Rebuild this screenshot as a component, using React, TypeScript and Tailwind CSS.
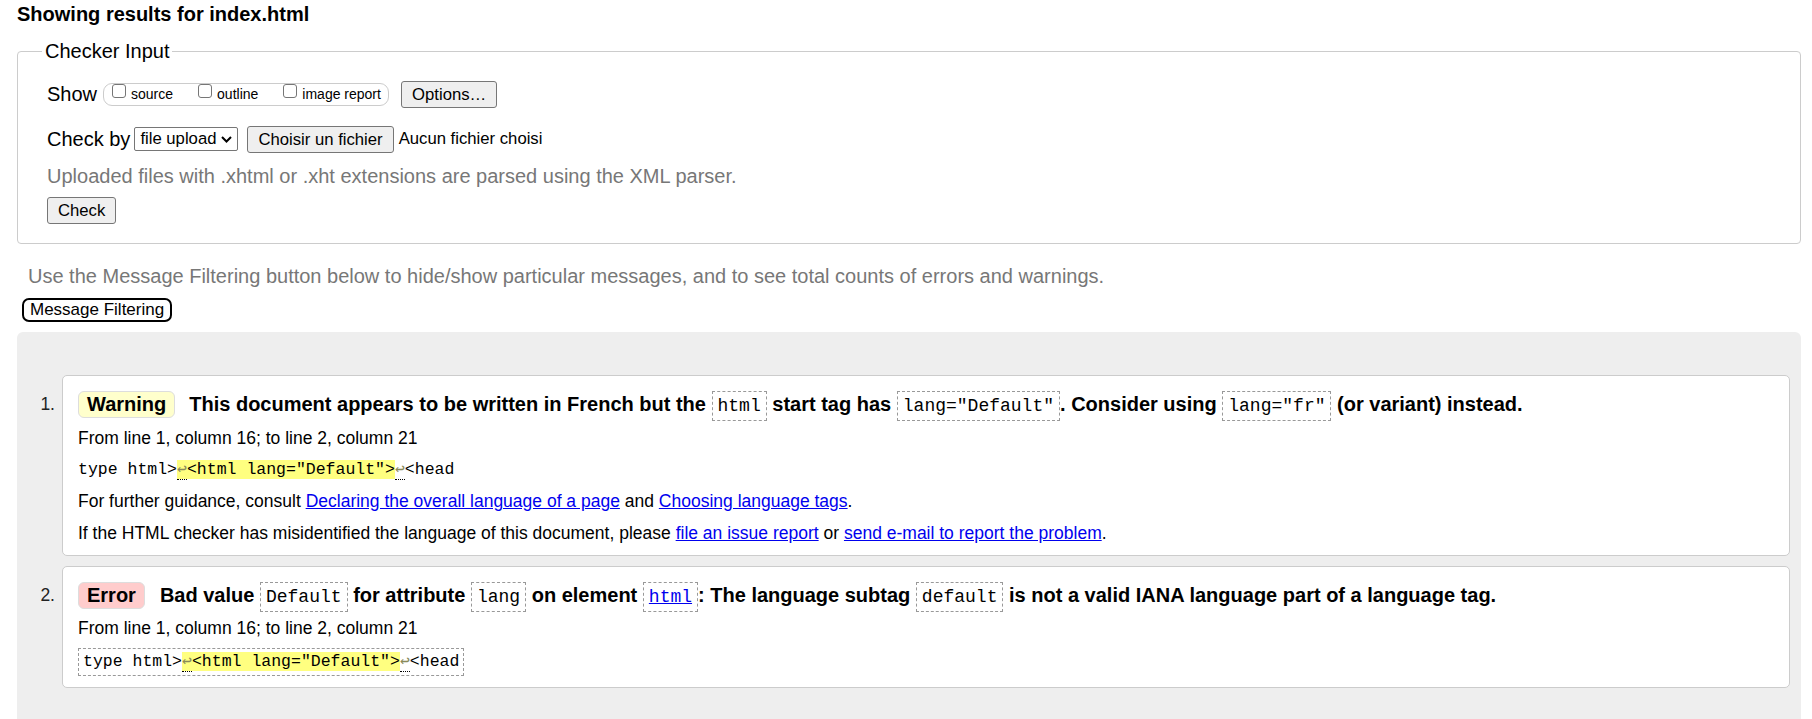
import type { ReactNode } from "react";

function Code({ children }: { children: ReactNode }) {
  return (
    <code className="inline-block border border-dashed border-[#999] px-[5px] font-['Liberation_Mono','DejaVu_Sans_Mono',monospace] text-[18px] font-normal leading-[28px]">
      {children}
    </code>
  );
}

function Ret() {
  return (
    <span className="border-b border-dotted border-black text-[#8a8a5a]">↩</span>
  );
}

function Extract() {
  return (
    <>
      type html&gt;
      <span className="bg-[#ffff80]">
        <Ret />
        &lt;html lang="Default"&gt;
      </span>
      <Ret />
      &lt;head
    </>
  );
}

function Btn({ children, className = "" }: { children: ReactNode; className?: string }) {
  return (
    <button
      type="button"
      className={`h-[27px] rounded-[3px] border border-[#767676] bg-[#efefef] px-[10px] text-[16.7px] leading-[25px] ${className}`}
    >
      {children}
    </button>
  );
}

function Check({ label }: { label: string }) {
  return (
    <label className="flex items-center gap-[5px]">
      <span className="mb-[6px] h-[14px] w-[14px] rounded-[3px] border border-[#767676] bg-white" />
      <span className="text-[14px]">{label}</span>
    </label>
  );
}

const link = "text-[#0000ee] underline";

function App() {
  return (
    <div className="min-h-screen bg-white pl-[17px] pr-[11px] font-['Liberation_Sans',Arial,sans-serif] text-black">
      <h2 className="pt-[2px] text-[20px] font-bold leading-[24px]">
        Showing results for index.html
      </h2>

      <fieldset className="mt-[13px] rounded-[4px] border border-[#ccc] pb-[19px] pl-[29px]">
        <legend className="-ml-[5px] pl-[3px] pr-[2px] text-[20px] leading-[24px]">
          Checker Input
        </legend>

        <div className="mt-[17px] flex h-[28px] items-center text-[20px]">
          <span>Show</span>
          <div className="ml-[6px] flex h-[23px] w-[286px] items-center gap-[25px] rounded-[9px] border border-[#ccc] pl-[8px]">
            <Check label="source" />
            <Check label="outline" />
            <Check label="image report" />
          </div>
          <Btn className="ml-[12px]">Options…</Btn>
        </div>

        <div className="mt-[17px] flex h-[28px] items-center text-[20px]">
          <span>Check by</span>
          <div className="ml-[4px] flex h-[24px] w-[104px] items-center justify-between rounded-[2px] border border-[#767676] bg-white pl-[5px] pr-[5px] text-[16.7px]">
            <span>file upload</span>
            <svg width="11" height="7" viewBox="0 0 11 7">
              <polyline points="1,1 5.5,5.5 10,1" fill="none" stroke="black" strokeWidth="2" />
            </svg>
          </div>
          <Btn className="ml-[9px]">Choisir un fichier</Btn>
          <span className="ml-[5px] text-[16.7px]">Aucun fichier choisi</span>
        </div>

        <p className="mt-[11px] text-[20px] leading-[24px] text-[#777]">
          Uploaded files with .xhtml or .xht extensions are parsed using the XML parser.
        </p>

        <div className="mt-[9px]">
          <Btn>Check</Btn>
        </div>
      </fieldset>

      <p className="ml-[11px] mt-[20px] text-[20px] leading-[24px] text-[#777]">
        Use the Message Filtering button below to hide/show particular messages, and to see total
        counts of errors and warnings.
      </p>
      <div className="mt-[10px]">
        <button
          type="button"
          className="ml-[5px] h-[24px] rounded-[7px] border-2 border-black bg-white px-[6px] text-[17px] leading-[20px]"
        >
          Message Filtering
        </button>
      </div>

      <div className="mt-[10px] rounded-t-[6px] bg-[#eeeeee] pb-[40px] pr-[11px] pt-[43px]">
        <ol className="flex flex-col gap-[10px]">
          <li className="flex">
            <span className="w-[45px] pr-[7px] pt-[12px] text-right text-[17.5px] leading-[34px] text-[#222]">
              1.
            </span>
            <div className="flex-1 rounded-[5px] border border-[#ccc] bg-white pb-[10px] pl-[15px] pt-[11px]">
              <div className="text-[20px] font-bold leading-[34px]">
                <span className="mr-[14px] inline-block rounded-[6px] border border-[#ddd] bg-[#ffffcc] px-[8px] leading-[25px]">
                  Warning
                </span>
                This document appears to be written in French but the <Code>html</Code> start tag
                has <Code>lang="Default"</Code>. Consider using <Code>lang="fr"</Code> (or variant)
                instead.
              </div>
              <p className="mt-[5px] text-[17.5px] leading-[24px]">
                From line 1, column 16; to line 2, column 21
              </p>
              <p className="mt-[8px] font-['Liberation_Mono','DejaVu_Sans_Mono',monospace] text-[16.5px] leading-[24px]">
                <Extract />
              </p>
              <p className="mt-[7px] text-[17.5px] leading-[24px]">
                For further guidance, consult{" "}
                <a className={link}>Declaring the overall language of a page</a> and{" "}
                <a className={link}>Choosing language tags</a>.
              </p>
              <p className="mt-[8px] text-[17.5px] leading-[24px]">
                If the HTML checker has misidentified the language of this document, please{" "}
                <a className={link}>file an issue report</a> or{" "}
                <a className={link}>send e-mail to report the problem</a>.
              </p>
            </div>
          </li>

          <li className="flex">
            <span className="w-[45px] pr-[7px] pt-[12px] text-right text-[17.5px] leading-[34px] text-[#222]">
              2.
            </span>
            <div className="flex-1 rounded-[5px] border border-[#ccc] bg-white pb-[11px] pl-[15px] pt-[11px]">
              <div className="text-[20px] font-bold leading-[34px]">
                <span className="mr-[15px] inline-block rounded-[6px] border border-[#ddd] bg-[#ffcccc] px-[8px] leading-[25px]">
                  Error
                </span>
                Bad value <Code>Default</Code> for attribute <Code>lang</Code> on element{" "}
                <Code>
                  <a className={link}>html</a>
                </Code>
                : The language subtag <Code>default</Code> is not a valid IANA language part of a
                language tag.
              </div>
              <p className="mt-[4px] text-[17.5px] leading-[24px]">
                From line 1, column 16; to line 2, column 21
              </p>
              <div className="mt-[8px]">
                <p className="inline-block border border-dashed border-[#999] px-[4px] font-['Liberation_Mono','DejaVu_Sans_Mono',monospace] text-[16.5px] leading-[26px]">
                  <Extract />
                </p>
              </div>
            </div>
          </li>
        </ol>
      </div>
    </div>
  );
}

export default App;
